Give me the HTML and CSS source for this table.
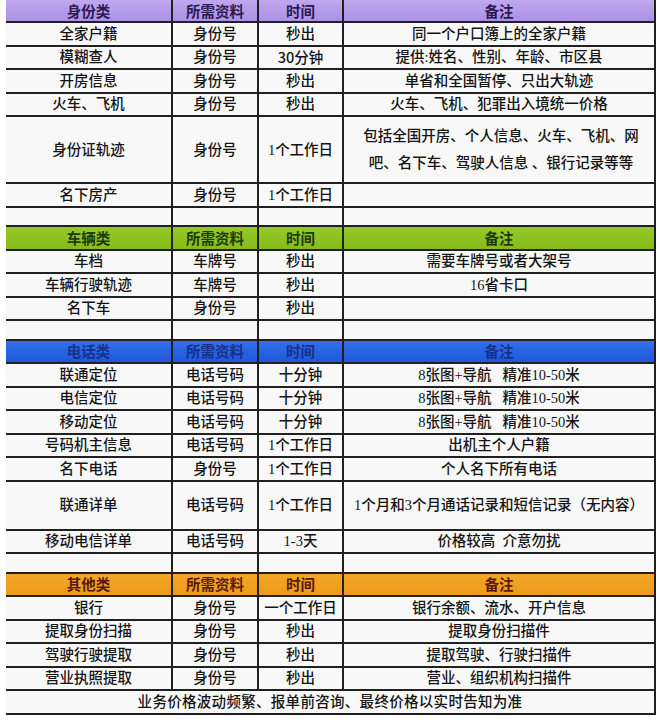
FILE: index.html
```html
<!DOCTYPE html>
<html lang="zh">
<head>
<meta charset="utf-8">
<link rel="stylesheet" href="styles.css">
</head>
<body>
<table class="price">
  <colgroup><col class="c1"><col class="c2"><col class="c3"><col class="c4"></colgroup>
  <tr class="hd purple first"><th>身份类</th><th>所需资料</th><th>时间</th><th>备注</th></tr>
  <tr><td>全家户籍</td><td>身份号</td><td>秒出</td><td>同一个户口簿上的全家户籍</td></tr>
  <tr><td>模糊查人</td><td>身份号</td><td class="sans">30分钟</td><td>提供:姓名、性别、年龄、市区县</td></tr>
  <tr><td>开房信息</td><td>身份号</td><td>秒出</td><td>单省和全国暂停、只出大轨迹</td></tr>
  <tr><td>火车、飞机</td><td>身份号</td><td>秒出</td><td>火车、飞机、犯罪出入境统一价格</td></tr>
  <tr class="tall"><td>身份证轨迹</td><td>身份号</td><td>1个工作日</td><td class="two">包括全国开房、个人信息、火车、飞机、网吧、名下车、驾驶人信息 、银行记录等等</td></tr>
  <tr><td>名下房产</td><td>身份号</td><td>1个工作日</td><td></td></tr>
  <tr class="gap"><td></td><td></td><td></td><td></td></tr>
  <tr class="hd green"><th>车辆类</th><th>所需资料</th><th>时间</th><th>备注</th></tr>
  <tr><td>车档</td><td>车牌号</td><td>秒出</td><td>需要车牌号或者大架号</td></tr>
  <tr><td>车辆行驶轨迹</td><td>车牌号</td><td>秒出</td><td>16省卡口</td></tr>
  <tr><td>名下车</td><td>身份号</td><td>秒出</td><td></td></tr>
  <tr class="gap"><td></td><td></td><td></td><td></td></tr>
  <tr class="hd blue"><th>电话类</th><th>所需资料</th><th>时间</th><th>备注</th></tr>
  <tr><td>联通定位</td><td>电话号码</td><td>十分钟</td><td>8张图+导航&nbsp;&nbsp;&nbsp;精准10-50米</td></tr>
  <tr><td>电信定位</td><td>电话号码</td><td>十分钟</td><td>8张图+导航&nbsp;&nbsp;&nbsp;精准10-50米</td></tr>
  <tr><td>移动定位</td><td>电话号码</td><td>十分钟</td><td>8张图+导航&nbsp;&nbsp;&nbsp;精准10-50米</td></tr>
  <tr><td>号码机主信息</td><td>电话号码</td><td>1个工作日</td><td>出机主个人户籍</td></tr>
  <tr><td>名下电话</td><td>身份号</td><td>1个工作日</td><td>个人名下所有电话</td></tr>
  <tr class="mid"><td>联通详单</td><td>电话号码</td><td>1个工作日</td><td>1个月和3个月通话记录和短信记录（无内容）</td></tr>
  <tr><td>移动电信详单</td><td>电话号码</td><td>1-3天</td><td>价格较高&nbsp;&nbsp;介意勿扰</td></tr>
  <tr class="gap"><td></td><td></td><td></td><td></td></tr>
  <tr class="hd orange"><th>其他类</th><th>所需资料</th><th>时间</th><th>备注</th></tr>
  <tr><td>银行</td><td>身份号</td><td>一个工作日</td><td>银行余额、流水、开户信息</td></tr>
  <tr><td>提取身份扫描</td><td>身份号</td><td>秒出</td><td>提取身份扫描件</td></tr>
  <tr><td>驾驶行驶提取</td><td>身份号</td><td>秒出</td><td>提取驾驶、行驶扫描件</td></tr>
  <tr><td>营业执照提取</td><td>身份号</td><td>秒出</td><td>营业、组织机构扫描件</td></tr>
  <tr class="foot"><td colspan="4">业务价格波动频繁、报单前咨询、最终价格以实时告知为准</td></tr>
</table>
</body>
</html>
```

FILE: styles.css
```css
html, body {
  margin: 0;
  padding: 0;
  background: #ffffff;
}

.price {
  margin-left: 6px;
  width: 649px;
  table-layout: fixed;
  border-collapse: collapse;
  font-family: "Liberation Serif", "Noto Sans CJK SC", sans-serif;
  font-size: 14.5px;
  font-weight: 500;
  color: #141414;
  background: #f8f8f8;
}

.c1 { width: 166px; }
.c2 { width: 86px; }
.c3 { width: 85px; }
.c4 { width: 312px; }

.price td,
.price th {
  border: 2px solid #202020;
  padding: 0;
  text-align: center;
  vertical-align: middle;
  line-height: 18px;
  white-space: nowrap;
  overflow: hidden;
}

.price tr > :first-child {
  border-left: none;
}

.price tr {
  height: 23.5px;
}

.price .first > * {
  border-top: none;
}

.price tr.first { height: 22px; }
.price tr.tall { height: 67px; }
.price tr.mid { height: 49px; }
.price tr.gap { height: 19.5px; }

.price td.two {
  white-space: normal;
  line-height: 27px;
  padding: 0 8px 0 12px;
  text-align: center;
}

.price td.sans {
  font-family: "Noto Sans CJK SC", sans-serif;
}

.hd th {
  font-family: "Noto Sans CJK SC", sans-serif;
  font-weight: 700;
  font-size: 14.5px;
}

.purple th {
  background: linear-gradient(180deg, #bea8ef 0%, #ab90e4 100%);
  color: #2a1a50;
}

.green th {
  background: linear-gradient(180deg, #96c928 0%, #86bb18 100%);
  color: #1c3a0c;
}

.blue th {
  background: linear-gradient(180deg, #3470e8 0%, #1c58da 100%);
  color: #17308a;
}

.orange th {
  background: linear-gradient(180deg, #f3a728 0%, #ec9a18 100%);
  color: #5a1808;
}

.foot td {
  letter-spacing: 0.3px;
}
```
